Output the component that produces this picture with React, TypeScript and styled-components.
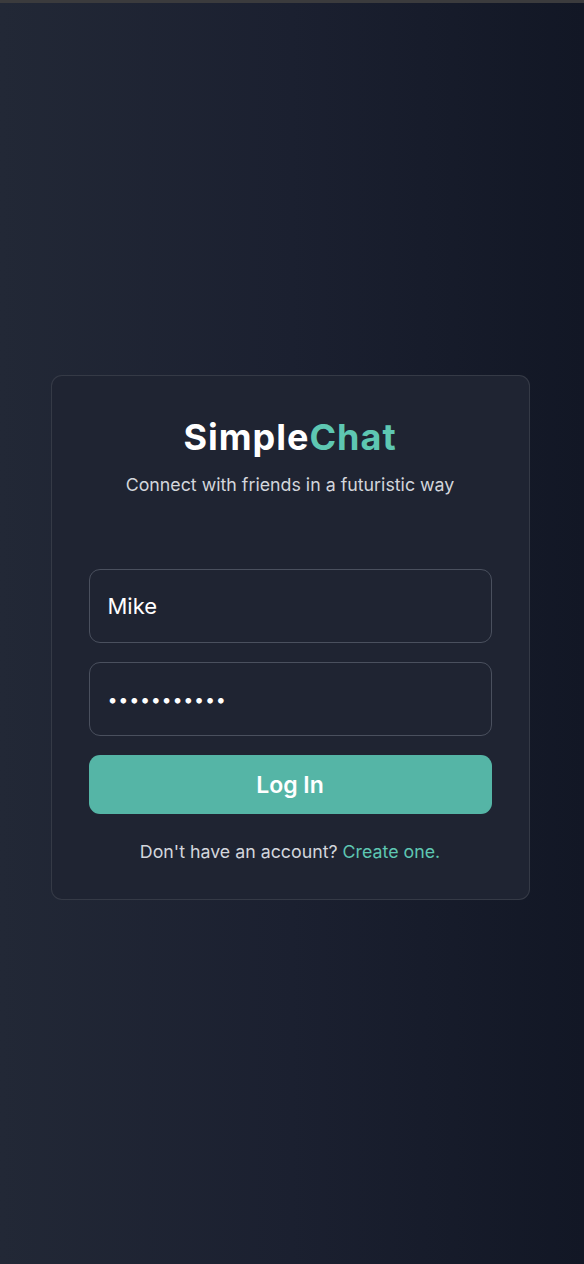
import React from "react";
import styled, { createGlobalStyle } from "styled-components";

const Global = createGlobalStyle`
  html, body { margin: 0; padding: 0; }
  body {
    font-family: Inter, "Liberation Sans", sans-serif;
    background: #131826;
  }
  * { box-sizing: border-box; }
`;

const Page = styled.div`
  min-height: 1264px;
  display: flex;
  flex-direction: column;
  background: linear-gradient(90deg, #222836 0%, #1b2030 50%, #121725 100%);
`;

const TopBar = styled.div`
  height: 3px;
  background: #3b3b3d;
  flex-shrink: 0;
`;

const Main = styled.main`
  flex: 1;
  display: flex;
  align-items: center;
  justify-content: center;
  padding: 8px 4px 0 0;
`;

const Card = styled.div`
  width: 479px;
  background: #1f2432;
  border: 1px solid rgba(255, 255, 255, 0.1);
  border-radius: 11px;
  padding: 40px 37px 35px;
  display: flex;
  flex-direction: column;
  align-items: stretch;
`;

const Title = styled.h1`
  margin: 0;
  text-align: center;
  font-size: 36px;
  line-height: 42px;
  font-weight: 700;
  color: #ffffff;
  letter-spacing: 1px;
`;

const Accent = styled.span`
  color: #5ec7b2;
`;

const Subtitle = styled.p`
  margin: 15px 0 0;
  text-align: center;
  font-size: 17.8px;
  line-height: 24px;
  color: #d3d6dc;
`;

const Form = styled.form`
  margin-top: 72px;
  display: flex;
  flex-direction: column;
  gap: 19px;
`;

const Input = styled.input`
  height: 74px;
  width: 100%;
  border-radius: 11px;
  border: 1.5px solid #4a505e;
  background: #1f2432;
  color: #ffffff;
  font-family: Inter, "Liberation Sans", sans-serif;
  font-size: 22px;
  padding: 0 18px;
  outline: none;
  &[type="password"] {
    font-size: 18px;
    letter-spacing: 0.7px;
  }
`;

const Button = styled.button`
  height: 59px;
  border: none;
  border-radius: 11px;
  background: #55b5a6;
  color: #ffffff;
  font-family: Inter, "Liberation Sans", sans-serif;
  font-size: 23px;
  font-weight: 600;
  cursor: pointer;
`;

const Footer = styled.p`
  margin: 26px 0 0;
  text-align: center;
  font-size: 17.8px;
  line-height: 24px;
  color: #d3d6dc;
`;

const Link = styled.a`
  color: #5ec7b2;
  text-decoration: none;
`;

export default function App() {
  return (
    <>
      <Global />
      <Page>
        <TopBar />
        <Main>
          <Card>
            <Title>
              Simple<Accent>Chat</Accent>
            </Title>
            <Subtitle>Connect with friends in a futuristic way</Subtitle>
            <Form onSubmit={(e) => e.preventDefault()}>
              <Input type="text" defaultValue="Mike" />
              <Input type="password" defaultValue="password123" />
              <Button type="submit">Log In</Button>
            </Form>
            <Footer>
              Don't have an account? <Link href="#">Create one.</Link>
            </Footer>
          </Card>
        </Main>
      </Page>
    </>
  );
}
